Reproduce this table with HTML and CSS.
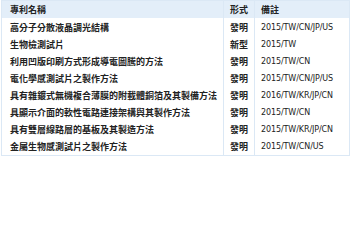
FILE: index.html
```html
<!DOCTYPE html>
<html lang="zh-Hant">
<head>
<meta charset="utf-8">
<title>專利列表</title>
<link rel="stylesheet" href="styles.css">
</head>
<body>
<table class="patents">
  <thead>
    <tr><th class="c-name">專利名稱</th><th class="c-type">形式</th><th class="c-note">備註</th></tr>
  </thead>
  <tbody>
    <tr><td>高分子分散液晶調光結構</td><td>發明</td><td class="lat">2015/TW/CN/JP/US</td></tr>
    <tr><td>生物檢測試片</td><td>新型</td><td class="lat">2015/TW</td></tr>
    <tr><td>利用凹版印刷方式形成導電圖騰的方法</td><td>發明</td><td class="lat">2015/TW/CN</td></tr>
    <tr><td>電化學感測試片之製作方法</td><td>發明</td><td class="lat">2015/TW/CN/JP/US</td></tr>
    <tr><td>具有雜鍍式無機複合薄膜的附載體銅箔及其製備方法</td><td>發明</td><td class="lat">2016/TW/KR/JP/CN</td></tr>
    <tr><td>具顯示介面的軟性電路連接架構與其製作方法</td><td>發明</td><td class="lat">2015/TW/CN</td></tr>
    <tr><td>具有雙層線路層的基板及其製造方法</td><td>發明</td><td class="lat">2015/TW/KR/JP/CN</td></tr>
    <tr><td>金屬生物感測試片之製作方法</td><td>發明</td><td class="lat">2015/TW/CN/US</td></tr>
  </tbody>
</table>
</body>
</html>
```

FILE: styles.css
```css
html, body {
  margin: 0;
  padding: 0;
  background: #ffffff;
}

body {
  font-family: "Noto Sans CJK TC", "Noto Sans", sans-serif;
  font-size: 9px;
  color: #222222;
}

.patents {
  width: 349px;
  margin-left: 1px;
  border-collapse: collapse;
  border: 1px solid #dbe8f5;
}

.patents th,
.patents td {
  height: 17px;
  padding: 0 6px;
  text-align: left;
  font-weight: 700;
  line-height: 17px;
  white-space: nowrap;
  border-left: 1px solid #dbe8f5;
  border-right: 1px solid #dbe8f5;
}

.patents th:first-child,
.patents td:first-child {
  padding-left: 8px;
}

.patents thead th {
  background: #e3eef9;
  height: 17px;
}

.patents tbody tr:first-child td {
  padding-top: 1px;
}

.patents .c-name { width: 203px; }
.patents .c-type { width: 16px; }

.patents td.lat {
  font-family: "DejaVu Sans", sans-serif;
  font-weight: 400;
  font-size: 8px;
  letter-spacing: -0.1px;
}
```
